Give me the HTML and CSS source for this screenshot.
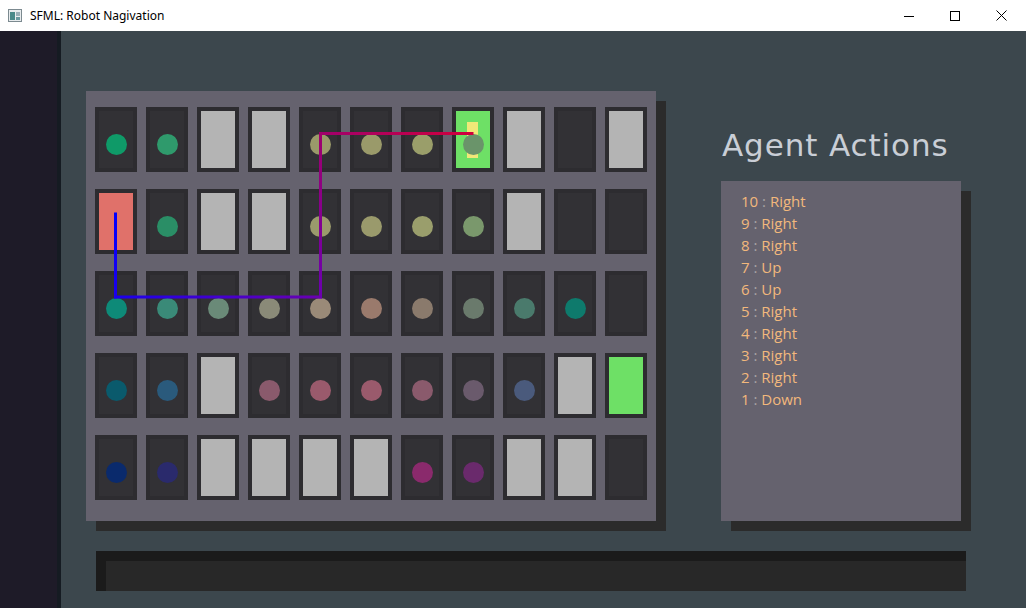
FILE: index.html
```html
<!DOCTYPE html>
<html>
<head>
<meta charset="utf-8">
<link rel="stylesheet" href="styles.css">
</head>
<body>
<div class="window">
  <div class="titlebar">
    <svg class="app-icon" width="14" height="13" viewBox="0 0 14 13">
      <rect x="0.5" y="0.5" width="13" height="12" fill="#e8ecee" stroke="#7c8a90"/>
      <rect x="2" y="3" width="5" height="8" fill="#4a8a8a"/>
      <rect x="8" y="3" width="4" height="4" fill="#9ab0b8"/>
      <rect x="8" y="8" width="4" height="3" fill="#6a9aa0"/>
    </svg>
    <span class="title">SFML: Robot Nagivation</span>
    <div class="controls">
      <span class="ctl"><svg width="10" height="10" viewBox="0 0 10 10"><path d="M0 5.5H10" stroke="#000" stroke-width="1"/></svg></span>
      <span class="ctl"><svg width="10" height="10" viewBox="0 0 10 10"><rect x="0.5" y="0.5" width="9" height="9" fill="none" stroke="#000"/></svg></span>
      <span class="ctl"><svg width="11" height="11" viewBox="0 0 11 11"><path d="M0.5 0.5L10.5 10.5M10.5 0.5L0.5 10.5" stroke="#000" stroke-width="1"/></svg></span>
    </div>
  </div>
  <div class="body">
    <div class="side"></div>
    <div class="main">
      <div class="top">
        <div class="grid-panel">
          <div class="grid">
            <!-- row 1 -->
            <div class="cell"><i class="dot" style="background:#0f9a68"></i></div>
            <div class="cell"><i class="dot" style="background:#2f9a6c"></i></div>
            <div class="cell obst"></div>
            <div class="cell obst"></div>
            <div class="cell"><i class="dot" style="background:#9a9a6a"></i></div>
            <div class="cell"><i class="dot" style="background:#9a9a6a"></i></div>
            <div class="cell"><i class="dot" style="background:#9a9e6a"></i></div>
            <div class="cell goal"><span class="marker"></span><i class="dot" style="background:#6a946a"></i></div>
            <div class="cell obst"></div>
            <div class="cell"></div>
            <div class="cell obst"></div>
            <!-- row 2 -->
            <div class="cell start"></div>
            <div class="cell"><i class="dot" style="background:#2a8e66"></i></div>
            <div class="cell obst"></div>
            <div class="cell obst"></div>
            <div class="cell"><i class="dot" style="background:#9a9a6c"></i></div>
            <div class="cell"><i class="dot" style="background:#9a9a6c"></i></div>
            <div class="cell"><i class="dot" style="background:#9a9e6c"></i></div>
            <div class="cell"><i class="dot" style="background:#7a986c"></i></div>
            <div class="cell obst"></div>
            <div class="cell"></div>
            <div class="cell"></div>
            <!-- row 3 -->
            <div class="cell"><i class="dot" style="background:#0e8a78"></i></div>
            <div class="cell"><i class="dot" style="background:#3a8a78"></i></div>
            <div class="cell"><i class="dot" style="background:#6a8a78"></i></div>
            <div class="cell"><i class="dot" style="background:#8a8a78"></i></div>
            <div class="cell"><i class="dot" style="background:#9a8a78"></i></div>
            <div class="cell"><i class="dot" style="background:#9a7a6c"></i></div>
            <div class="cell"><i class="dot" style="background:#8a7a6c"></i></div>
            <div class="cell"><i class="dot" style="background:#6a7a6c"></i></div>
            <div class="cell"><i class="dot" style="background:#4a7a6c"></i></div>
            <div class="cell"><i class="dot" style="background:#0e7a6c"></i></div>
            <div class="cell"></div>
            <!-- row 4 -->
            <div class="cell"><i class="dot" style="background:#0a5a6c"></i></div>
            <div class="cell"><i class="dot" style="background:#2a5a7c"></i></div>
            <div class="cell obst"></div>
            <div class="cell"><i class="dot" style="background:#8a5a6c"></i></div>
            <div class="cell"><i class="dot" style="background:#9a5a6c"></i></div>
            <div class="cell"><i class="dot" style="background:#9a5a6c"></i></div>
            <div class="cell"><i class="dot" style="background:#8a5a6c"></i></div>
            <div class="cell"><i class="dot" style="background:#6a5a6c"></i></div>
            <div class="cell"><i class="dot" style="background:#4a5a7c"></i></div>
            <div class="cell obst"></div>
            <div class="cell goal"></div>
            <!-- row 5 -->
            <div class="cell"><i class="dot" style="background:#0a2a6c"></i></div>
            <div class="cell"><i class="dot" style="background:#2a2a6c"></i></div>
            <div class="cell obst"></div>
            <div class="cell obst"></div>
            <div class="cell obst"></div>
            <div class="cell obst"></div>
            <div class="cell"><i class="dot" style="background:#8a2a6c"></i></div>
            <div class="cell"><i class="dot" style="background:#6a2a6c"></i></div>
            <div class="cell obst"></div>
            <div class="cell obst"></div>
            <div class="cell"></div>
          </div>
          <svg class="path" width="570" height="430" viewBox="0 0 570 430">
            <defs>
              <linearGradient id="g1" gradientUnits="userSpaceOnUse" x1="30" y1="123" x2="30" y2="206">
                <stop offset="0" stop-color="#0000ff"/><stop offset="1" stop-color="#1b00ec"/>
              </linearGradient>
              <linearGradient id="g2" gradientUnits="userSpaceOnUse" x1="30" y1="206" x2="234" y2="206">
                <stop offset="0" stop-color="#1b00ec"/><stop offset="1" stop-color="#6a00b0"/>
              </linearGradient>
              <linearGradient id="g3" gradientUnits="userSpaceOnUse" x1="234" y1="206" x2="234" y2="42">
                <stop offset="0" stop-color="#6a00b0"/><stop offset="1" stop-color="#a0006c"/>
              </linearGradient>
              <linearGradient id="g4" gradientUnits="userSpaceOnUse" x1="234" y1="42" x2="387" y2="42">
                <stop offset="0" stop-color="#a0006c"/><stop offset="1" stop-color="#d0003c"/>
              </linearGradient>
            </defs>
            <g stroke-width="3" fill="none" stroke-linecap="square">
              <path d="M29.5 123V206" stroke="url(#g1)"/>
              <path d="M29.5 206H234.5" stroke="url(#g2)"/>
              <path d="M234.5 206V42.5" stroke="url(#g3)"/>
              <path d="M234.5 42.5H386" stroke="url(#g4)"/>
            </g>
          </svg>
        </div>
        <div class="actions">
          <h1 class="actions-title">Agent Actions</h1>
          <div class="action-panel">
            <ul class="action-list">
              <li><span class="n">10</span><span class="sep"> : </span>Right</li>
              <li><span class="n">9</span><span class="sep"> : </span>Right</li>
              <li><span class="n">8</span><span class="sep"> : </span>Right</li>
              <li><span class="n">7</span><span class="sep"> : </span>Up</li>
              <li><span class="n">6</span><span class="sep"> : </span>Up</li>
              <li><span class="n">5</span><span class="sep"> : </span>Right</li>
              <li><span class="n">4</span><span class="sep"> : </span>Right</li>
              <li><span class="n">3</span><span class="sep"> : </span>Right</li>
              <li><span class="n">2</span><span class="sep"> : </span>Right</li>
              <li><span class="n">1</span><span class="sep"> : </span>Down</li>
            </ul>
          </div>
        </div>
      </div>
      <div class="console"><div class="console-inner"></div></div>
    </div>
  </div>
</div>
</body>
</html>
```
FILE: styles.css
```css
* { box-sizing: border-box; }
html, body { margin: 0; padding: 0; }
body { width: 1026px; height: 608px; overflow: hidden; background: #3c474d; }

.window { width: 1026px; height: 608px; display: flex; flex-direction: column; }

.titlebar {
  height: 31px;
  flex: none;
  background: #ffffff;
  display: flex;
  align-items: center;
  font-family: "Noto Sans", "Open Sans", sans-serif;
  font-size: 12px;
  color: #000;
}
.app-icon { margin-left: 8px; margin-right: 8px; }
.title { line-height: 16px; }
.controls { margin-left: auto; display: flex; height: 31px; margin-right: 2px; }
.ctl { width: 46px; height: 31px; display: flex; align-items: center; justify-content: center; }

.body { flex: 1; display: flex; }
.side { width: 61px; background: #1e1b28; border-right: 4px solid #151b22; flex: none; }
.main { flex: 1; background: #3c474d; padding: 60px 0 0 25px; }

.top { display: flex; align-items: flex-start; }

.grid-panel {
  position: relative;
  width: 570px;
  height: 430px;
  background: #65626e;
  box-shadow: 10px 10px 0 #2b2b2b;
  padding: 16px 0 0 9px;
}
.grid {
  display: grid;
  grid-template-columns: repeat(11, 42px);
  grid-template-rows: repeat(5, 65px);
  column-gap: 9px;
  row-gap: 17px;
}
.cell {
  position: relative;
  border: 4px solid #2d2c30;
  background: #323135;
  display: flex;
  align-items: center;
  justify-content: center;
  padding-top: 9px;
}
.cell.obst { background: #b4b4b4; }
.cell.start { background: #e0716a; }
.cell.goal { background: #6ee066; }
.dot { display: block; width: 21px; height: 21px; border-radius: 50%; position: relative; }
.marker {
  position: absolute;
  left: 11px;
  top: 11px;
  width: 11px;
  height: 36px;
  background: #f0e878;
}

.path { position: absolute; left: 0; top: 0; pointer-events: none; }

.actions { margin-left: 65px; }
.actions-title {
  margin: 34px 0 16px 1px;
  font-family: "DejaVu Sans", sans-serif;
  font-weight: 400;
  font-size: 31px;
  letter-spacing: 0.9px;
  line-height: 40px;
  color: #c9ced6;
  white-space: nowrap;
}
.action-panel {
  width: 240px;
  height: 340px;
  background: #65626e;
  box-shadow: 10px 10px 0 #2b2b2b;
  padding: 9px 0 0 20px;
}
.action-list {
  list-style: none;
  margin: 0;
  padding: 0;
  font-family: "Open Sans", sans-serif;
  font-size: 15px;
  line-height: 22px;
  color: #f2b87c;
}
.action-list .sep { color: #a8a2a4; }

.console {
  margin: 30px 0 0 10px;
  width: 870px;
  height: 40px;
  background: #1b1b1b;
  padding: 10px 0 0 10px;
}
.console-inner { height: 30px; background: #282828; }
```
